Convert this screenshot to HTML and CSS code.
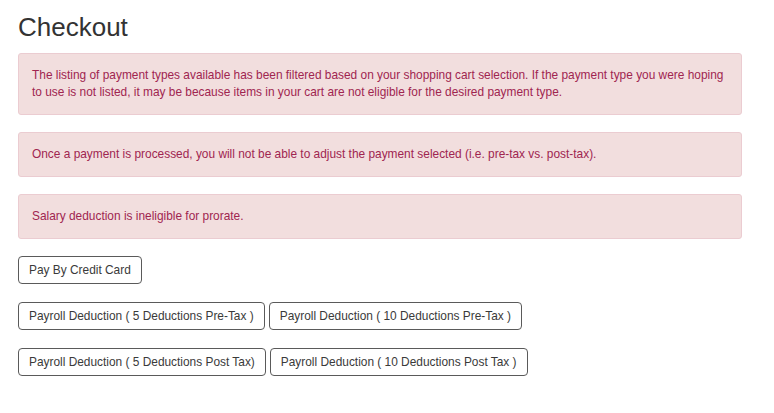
FILE: index.html
```html
<!DOCTYPE html>
<html>
<head>
<meta charset="utf-8">
<link rel="stylesheet" href="styles.css">
</head>
<body>
<div class="page">
  <h2 class="title">Checkout</h2>
  <div class="alert">The listing of payment types available has been filtered based on your shopping cart selection. If the payment type you were hoping to use is not listed, it may be because items in your cart are not eligible for the desired payment type.</div>
  <div class="alert">Once a payment is processed, you will not be able to adjust the payment selected (i.e. pre-tax vs. post-tax).</div>
  <div class="alert">Salary deduction is ineligible for prorate.</div>
  <div class="row">
    <button class="btn">Pay By Credit Card</button>
  </div>
  <div class="row">
    <button class="btn">Payroll Deduction ( 5 Deductions Pre-Tax )</button>
    <button class="btn">Payroll Deduction ( 10 Deductions Pre-Tax )</button>
  </div>
  <div class="row">
    <button class="btn">Payroll Deduction ( 5 Deductions Post Tax)</button>
    <button class="btn">Payroll Deduction ( 10 Deductions Post Tax )</button>
  </div>
</div>
</body>
</html>
```
FILE: styles.css
```css
html, body {
  margin: 0;
  padding: 0;
  background: #ffffff;
}
body {
  font-family: "Liberation Sans", Arial, sans-serif;
  color: #333333;
}
.page {
  width: 724px;
  padding: 12px 0 0 18px;
}
.title {
  font-size: 26px;
  font-weight: normal;
  line-height: 30px;
  margin: 0 0 11px 0;
  color: #333333;
}
.alert {
  background: #f2dede;
  border: 1px solid #ebccd1;
  border-radius: 3px;
  color: #a02550;
  font-size: 11.9px;
  line-height: 17px;
  padding: 13px 6px 13px 13px;
  margin-bottom: 17px;
}
.row {
  display: flex;
  gap: 4px;
  margin-bottom: 18px;
}
.btn {
  font-family: "Liberation Sans", Arial, sans-serif;
  font-size: 11.9px;
  color: #3a3a3a;
  background: #ffffff;
  border: 1px solid #5a5a5a;
  border-radius: 4px;
  height: 28px;
  padding: 0 10px;
  line-height: 26px;
}
```
